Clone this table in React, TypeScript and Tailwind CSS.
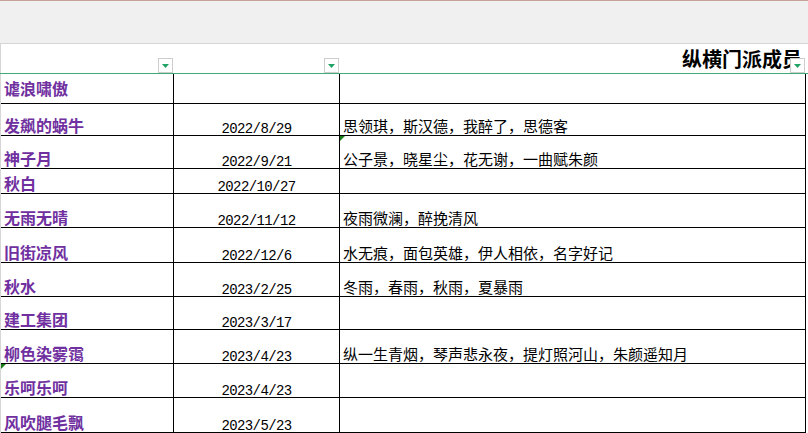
import React from "react";

type Row = { name: string; date: string; members: string; h: number; namePb?: string; noteC3?: boolean; noteC1?: boolean };

const rows: Row[] = [
  { name: "谑浪啸傲", date: "", members: "", h: 30, namePb: "pb-[7px]" },
  { name: "发飙的蜗牛", date: "2022/8/29", members: "思领琪，斯汉德，我醉了，思德客", h: 32 },
  { name: "神子月", date: "2022/9/21", members: "公子景，晓星尘，花无谢，一曲赋朱颜", h: 33, noteC3: true },
  { name: "秋白", date: "2022/10/27", members: "", h: 25 },
  { name: "无雨无晴", date: "2022/11/12", members: "夜雨微澜，醉挽清风", h: 34 },
  { name: "旧街凉风", date: "2022/12/6", members: "水无痕，面包英雄，伊人相依，名字好记", h: 35 },
  { name: "秋水", date: "2023/2/25", members: "冬雨，春雨，秋雨，夏暴雨", h: 34 },
  { name: "建工集团", date: "2023/3/17", members: "", h: 33 },
  { name: "柳色染雾霭", date: "2023/4/23", members: "纵一生青烟，琴声悲永夜，提灯照河山，朱颜遥知月", h: 34 },
  { name: "乐呵乐呵", date: "2023/4/23", members: "", h: 34, noteC1: true },
  { name: "风吹腿毛飘", date: "2023/5/23", members: "", h: 35 },
];

const cjk = { fontFamily: '"Noto Sans CJK SC", "Noto Sans", sans-serif' };
const mono = { fontFamily: '"Liberation Mono", "DejaVu Sans Mono", monospace' };

function FilterBtn({ right = "right-0" }: { right?: string }) {
  return (
    <div className={`absolute ${right} bottom-0 w-[15px] h-[15px] border border-[#cdcdcd] bg-white flex items-center justify-center`}>
      <svg width="7" height="4" viewBox="0 0 7 4">
        <polygon points="0,0 7,0 3.5,4" fill="#21a366" />
      </svg>
    </div>
  );
}

function Note() {
  return (
    <svg className="absolute left-0 top-0" width="5" height="5" viewBox="0 0 5 5">
      <polygon points="0,0 5,0 0,5" fill="#1a7f1a" />
    </svg>
  );
}

export default function App() {
  return (
    <div className="w-[808px] h-[433px] overflow-hidden bg-white relative" style={cjk}>
      <div className="h-px bg-[#c6a298]" />
      <div className="h-[43px] bg-[#f0f0f0] border-b border-[#d6d6d6]" />
      <div className="flex flex-col">
        <div className="flex h-[30px] border-b border-[#3fac78] w-[808px]">
          <div className="w-px bg-[#d6d6d6]" />
          <div className="relative w-[173px] pr-px">
            <FilterBtn right="right-px" />
          </div>
          <div className="relative w-[166px] pr-px">
            <FilterBtn right="right-px" />
          </div>
          <div className="relative w-[465px] flex items-end justify-end pb-[4px] pr-[3px]">
            <span className="text-[20px] leading-none font-bold text-black whitespace-nowrap">纵横门派成员</span>
            <FilterBtn />
          </div>
        </div>
        {rows.map((r, i) => (
          <div key={i} className="flex" style={{ height: r.h }}>
            <div className="w-px bg-[#d6d6d6]" />
            <div className="flex w-[805px] border-b border-black">
              <div className={`relative w-[173px] border-r border-black flex items-end pl-[3px] ${r.namePb ?? "pb-[2px]"}`}>
                {r.noteC1 && <Note />}
                <span className="text-[16px] leading-none font-bold text-[#7030a0] whitespace-nowrap">{r.name}</span>
              </div>
              <div className="w-[166px] border-r border-black flex items-end justify-center">
                <span className="text-[14px] leading-[11px] tracking-[-0.6px] text-black whitespace-nowrap" style={mono}>
                  {r.date}
                </span>
              </div>
              <div className="relative w-[466px] border-r border-black flex items-end pl-[3px] pb-[2px]">
                {r.noteC3 && <Note />}
                <span className="text-[15px] leading-none text-black whitespace-nowrap">{r.members}</span>
              </div>
            </div>
          </div>
        ))}
      </div>
    </div>
  );
}
